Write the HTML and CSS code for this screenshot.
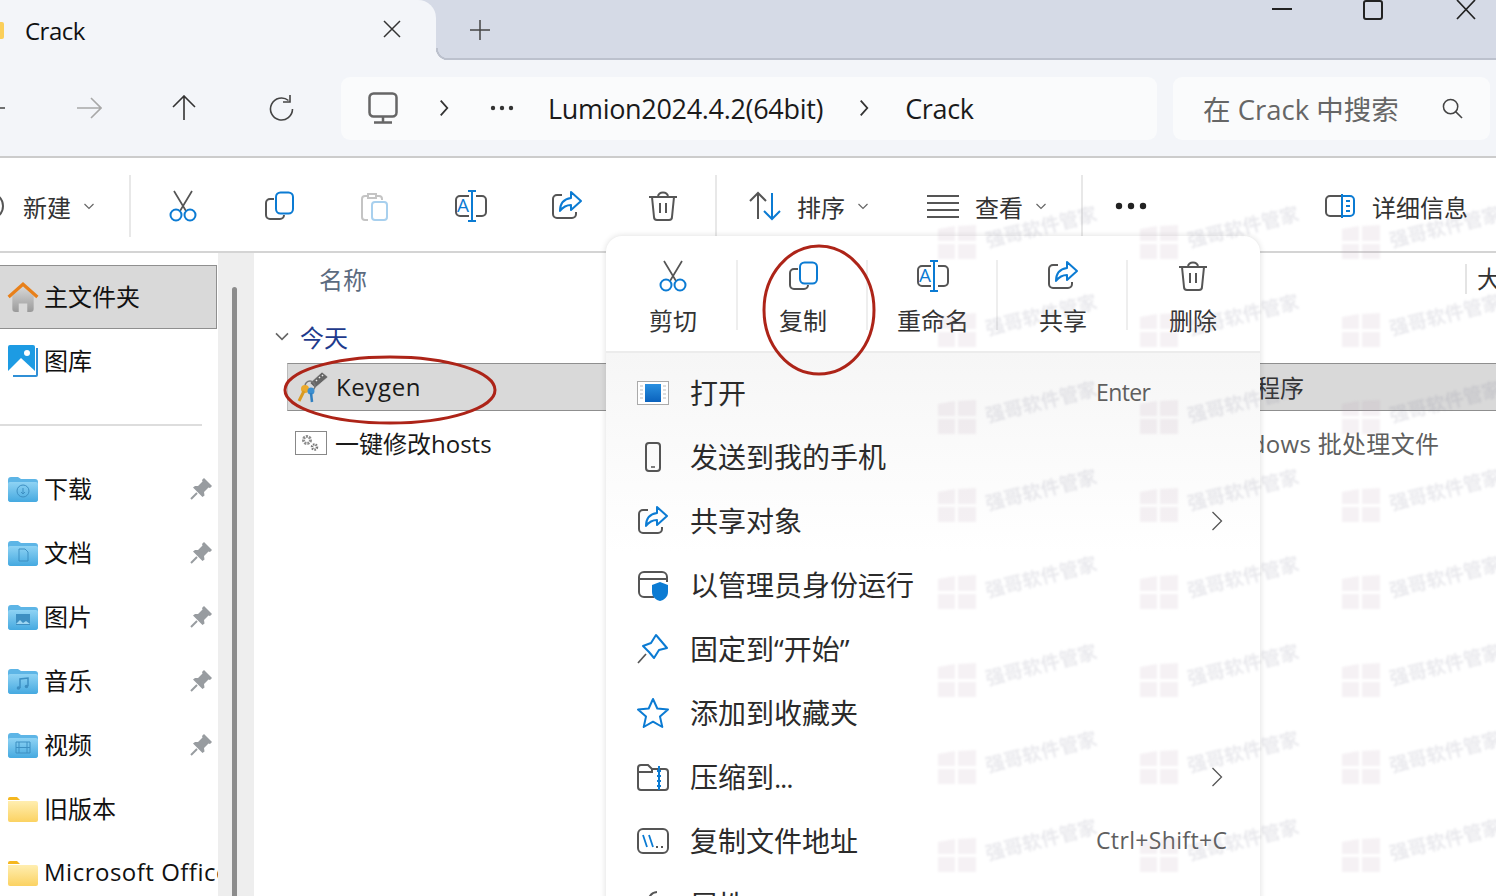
FILE: index.html
```html
<!DOCTYPE html>
<html lang="zh-CN">
<head>
    <meta charset="UTF-8">
    <meta name="viewport" content="width=device-width, initial-scale=1.0">
    <title>Crack - File Explorer</title>
    <link rel="stylesheet" href="styles.css">
</head>
<body>
    <!-- shared icons -->
    <svg class="sprite" xmlns="http://www.w3.org/2000/svg">
        <defs>
            <linearGradient id="g-blue" x1="0" y1="0" x2="0" y2="1"><stop offset="0" stop-color="#8fd3f4"/><stop offset="1" stop-color="#45a9e0"/></linearGradient>
            <linearGradient id="g-yellow" x1="0" y1="0" x2="0" y2="1"><stop offset="0" stop-color="#ffeeb0"/><stop offset="1" stop-color="#fbd262"/></linearGradient>
            <linearGradient id="g-home" x1="0" y1="0" x2="0" y2="1"><stop offset="0" stop-color="#d8d8d8"/><stop offset="1" stop-color="#9a9a9a"/></linearGradient>
            <linearGradient id="g-open" x1="0" y1="0" x2="0" y2="1"><stop offset="0" stop-color="#2a90e0"/><stop offset="1" stop-color="#0a62bd"/></linearGradient>
        </defs>
        <symbol id="i-cut" viewBox="0 0 32 32">
            <path d="M7 1l12 20M25 1L13 21" fill="none" stroke="#555" stroke-width="1.700"/>
            <circle cx="9" cy="25" r="5.500" fill="none" stroke="#0b7bd3" stroke-width="2"/>
            <circle cx="23" cy="25" r="5.500" fill="none" stroke="#0b7bd3" stroke-width="2"/>
        </symbol>
        <symbol id="i-copy" viewBox="0 0 32 32">
            <path d="M11 9H7a4 4 0 0 0-4 4v12a4 4 0 0 0 4 4h10a4 4 0 0 0 4-4" fill="none" stroke="#555" stroke-width="2"/>
            <rect x="13" y="2.500" width="17" height="21" rx="4.500" fill="none" stroke="#0b7bd3" stroke-width="2"/>
        </symbol>
        <symbol id="i-paste" viewBox="0 0 32 32">
            <path d="M17 6h3a3 3 0 0 1 3 3v1M9 30H6a3 3 0 0 1-3-3V9a3 3 0 0 1 3-3h3M9 4h8v4H9z" fill="none" stroke="#c4c4c4" stroke-width="2"/>
            <rect x="13" y="12" width="15" height="18" rx="3" fill="none" stroke="#a8d0ee" stroke-width="2"/>
        </symbol>
        <symbol id="i-rename" viewBox="0 0 32 32">
            <path d="M14 6H5a4 4 0 0 0-4 4v12a4 4 0 0 0 4 4h9M21 6h6a4 4 0 0 1 4 4v12a4 4 0 0 1-4 4h-6" fill="none" stroke="#555" stroke-width="2"/>
            <path d="M13 1h8M13 31h8M17 1v30" fill="none" stroke="#0b7bd3" stroke-width="2"/>
            <text x="8" y="21.500" class="icon-a" text-anchor="middle">A</text>
        </symbol>
        <symbol id="i-share" viewBox="0 0 32 32">
            <path d="M11 5H6a4 4 0 0 0-4 4v15a4 4 0 0 0 4 4h15a4 4 0 0 0 4-4v-2" fill="none" stroke="#555" stroke-width="2"/>
            <path d="M20 2l10 9-10 9v-5c-5 0-8 2-11 6 0-8 4-12 11-13z" fill="none" stroke="#0b7bd3" stroke-width="2" stroke-linejoin="round"/>
        </symbol>
        <symbol id="i-trash" viewBox="0 0 32 32">
            <path d="M2 7h28M11 7c0-6 10-6 10 0M5 7l2 20a3 3 0 0 0 3 3h12a3 3 0 0 0 3-3l2-20M13 13v10M19 13v10" fill="none" stroke="#555" stroke-width="2"/>
        </symbol>
        <symbol id="i-folder-blue" viewBox="0 0 30 26">
            <path d="M0 4a3 3 0 0 1 3-3h7l3 2h14a3 3 0 0 1 3 3v17a3 3 0 0 1-3 3H3a3 3 0 0 1-3-3z" fill="#5db5e6"/>
            <path d="M0 8a2 2 0 0 1 2-2h26a2 2 0 0 1 2 2v15a3 3 0 0 1-3 3H3a3 3 0 0 1-3-3z" fill="url(#g-blue)"/>
        </symbol>
        <symbol id="i-folder-yellow" viewBox="0 0 30 26">
            <path d="M0 3a2 2 0 0 1 2-2h7l3 3H0z" fill="#f5b71f"/>
            <path d="M0 5h28a2 2 0 0 1 2 2v17a2 2 0 0 1-2 2H2a2 2 0 0 1-2-2z" fill="url(#g-yellow)"/>
        </symbol>
        <symbol id="i-pin" viewBox="0 0 22 22">
            <path d="M14 0l8 8-2 2-1.500-.5L14 14l.5 3.500-2 1.500L3 9.500 5 8h3l4.500-4.500L12 2z" fill="#989ca0"/>
            <path d="M7 15l-6 6" stroke="#989ca0" stroke-width="2"/>
        </symbol>
        <symbol id="i-chev" viewBox="0 0 12 12">
            <path d="M1.500 4L6 8.500 10.500 4" fill="none" stroke="#666" stroke-width="1.200"/>
        </symbol>
        <symbol id="i-right" viewBox="0 0 12 22">
            <path d="M2 2l8 9-8 9" fill="none" stroke="#333" stroke-width="2.200"/>
        </symbol>
        <symbol id="i-right-thin" viewBox="0 0 12 22">
            <path d="M1.500 2l9 9-9 9" fill="none" stroke="#555" stroke-width="1.300"/>
        </symbol>
        <symbol id="i-win" viewBox="0 0 38 34">
            <path d="M0 4l17-3v15H0zM20 1l18-1v16H20zM0 19h17v15H0zM20 19h18v15H20z"/>
        </symbol>
    </svg>

    <div class="window">
        <header class="tabstrip">
            <div class="tab">
                <span class="tab-folder"></span>
                <span class="tab-title">Crack</span>
                <svg class="tab-close" viewBox="0 0 18 18"><path d="M1 1l16 16M17 1L1 17" stroke="#333" stroke-width="1.500"/></svg>
            </div>
            <svg class="tab-plus" viewBox="0 0 20 20"><path d="M10 0v20M0 10h20" stroke="#444" stroke-width="1.500"/></svg>
            <div class="winctl">
                <svg class="ctl-min" viewBox="0 0 20 20"><path d="M0 9h20" stroke="#222" stroke-width="2"/></svg>
                <svg class="ctl-max" viewBox="0 0 20 20"><rect x="1" y="1" width="18" height="18" rx="2" fill="none" stroke="#222" stroke-width="2"/></svg>
                <svg class="ctl-close" viewBox="0 0 20 20"><path d="M1 0l18 19M19 0L1 19" stroke="#222" stroke-width="1.700"/></svg>
            </div>
        </header>

        <nav class="navbar">
            <div class="nav-btn nav-first"><svg viewBox="0 0 26 26"><path d="M25 13H1M11 3L1 13l10 10" fill="none" stroke="#444" stroke-width="1.600"/></svg></div>
            <div class="nav-btn"><svg viewBox="0 0 26 26"><path d="M1 13h24M15 3l10 10-10 10" fill="none" stroke="#a8a8a8" stroke-width="1.600"/></svg></div>
            <div class="nav-btn nav-up"><svg viewBox="0 0 26 26"><path d="M13 25V1M2 12L13 1l11 11" fill="none" stroke="#333" stroke-width="1.600"/></svg></div>
            <div class="nav-btn"><svg viewBox="0 0 26 26"><path d="M20.500 5.500A11 11 0 1 0 24.500 14M22 0v7h-7" fill="none" stroke="#444" stroke-width="1.600"/></svg></div>
            <div class="address">
                <svg class="pc-icon" viewBox="0 0 30 32"><rect x="1.500" y="1.500" width="27" height="23" rx="4" fill="none" stroke="#666" stroke-width="2.500"/><path d="M15 25v5M6 30.500h18" stroke="#666" stroke-width="2.500"/></svg>
                <svg class="crumb-sep sep-first" viewBox="0 0 12 22"><use href="#i-right"/></svg>
                <svg class="crumb-dots" viewBox="0 0 24 6"><circle cx="3" cy="3" r="2.200" fill="#333"/><circle cx="12" cy="3" r="2.200" fill="#333"/><circle cx="21" cy="3" r="2.200" fill="#333"/></svg>
                <span class="crumb crumb-lumion">Lumion2024.4.2(64bit)</span>
                <svg class="crumb-sep sep-second" viewBox="0 0 12 22"><use href="#i-right"/></svg>
                <span class="crumb crumb-crack">Crack</span>
            </div>
            <div class="search">
                <span class="search-text">在 Crack 中搜索</span>
                <svg class="search-icon" viewBox="0 0 22 22"><circle cx="9" cy="9" r="7.500" fill="none" stroke="#444" stroke-width="1.600"/><path d="M14 14l7 7" stroke="#444" stroke-width="1.600"/></svg>
            </div>
        </nav>

        <div class="toolbar">
            <div class="tool-new">
                <svg class="new-circle" viewBox="0 0 32 32"><circle cx="16" cy="16" r="13" fill="none" stroke="#555" stroke-width="2"/></svg>
                <span>新建</span>
                <svg class="chev" viewBox="0 0 12 12"><use href="#i-chev"/></svg>
            </div>
            <span class="tool-sep"></span>
            <div class="tool tool-cut"><svg class="icon32"><use href="#i-cut"/></svg></div>
            <div class="tool tool-copy"><svg class="icon32"><use href="#i-copy"/></svg></div>
            <div class="tool"><svg class="icon32"><use href="#i-paste"/></svg></div>
            <div class="tool"><svg class="icon32"><use href="#i-rename"/></svg></div>
            <div class="tool"><svg class="icon32"><use href="#i-share"/></svg></div>
            <div class="tool"><svg class="icon32"><use href="#i-trash"/></svg></div>
            <span class="tool-sep sep-sort"></span>
            <div class="tool-text tool-sort">
                <svg class="icon32" viewBox="0 0 32 32"><path d="M9 29V3M1 11l8-8 8 8" fill="none" stroke="#555" stroke-width="2"/><path d="M23 3v26M15 21l8 8 8-8" fill="none" stroke="#0b7bd3" stroke-width="2"/></svg>
                <span>排序</span>
                <svg class="chev" viewBox="0 0 12 12"><use href="#i-chev"/></svg>
            </div>
            <div class="tool-text tool-view">
                <svg class="icon32" viewBox="0 0 32 32"><path d="M0 6h32M0 13h32M0 20h32M0 27h32" stroke="#555" stroke-width="2"/></svg>
                <span>查看</span>
                <svg class="chev" viewBox="0 0 12 12"><use href="#i-chev"/></svg>
            </div>
            <span class="tool-sep sep-more"></span>
            <svg class="more-dots" viewBox="0 0 32 8"><circle cx="4" cy="4" r="3.200" fill="#222"/><circle cx="16" cy="4" r="3.200" fill="#222"/><circle cx="28" cy="4" r="3.200" fill="#222"/></svg>
            <div class="tool-text tool-details">
                <svg class="icon32" viewBox="0 0 32 32"><path d="M18 6H6a4 4 0 0 0-4 4v12a4 4 0 0 0 4 4h12" fill="none" stroke="#555" stroke-width="2"/><path d="M18 4v24M18 6h8a4 4 0 0 1 4 4v12a4 4 0 0 1-4 4h-8M22 11h4M22 16h4M22 21h4" fill="none" stroke="#0b7bd3" stroke-width="2"/></svg>
                <span>详细信息</span>
            </div>
        </div>

        <div class="main">
            <aside class="sidebar">
                <div class="side-row selected">
                    <svg class="side-icon side-icon-lg" viewBox="0 0 30 30"><path d="M5 14l10-9 10 9v12a3 3 0 0 1-3 3h-3v-8h-8v8H8a3 3 0 0 1-3-3z" fill="url(#g-home)"/><path d="M1.500 15L15 3l13.500 12" fill="none" stroke="#e8801a" stroke-width="3"/></svg>
                    <span class="side-label">主文件夹</span>
                </div>
                <div class="side-row">
                    <svg class="side-icon side-icon-lg" viewBox="0 0 30 32"><path d="M28 3h2v27a2 2 0 0 1-2 2H5v-2h23z" fill="#2f8fd6"/><rect x="0" y="0" width="27" height="28" rx="2" fill="#1d9be3"/><path d="M0 26l13-13 14 13v2H0z" fill="#fff"/><circle cx="19" cy="8" r="3" fill="#fff"/></svg>
                    <span class="side-label">图库</span>
                </div>
                <div class="side-divider"></div>
                <div class="side-row">
                    <svg class="side-icon" viewBox="0 0 30 26"><use href="#i-folder-blue"/><circle cx="15" cy="15" r="6" fill="none" stroke="#3d8fc2"/><path d="M15 12v6M13 16l2 2 2-2" fill="none" stroke="#3d8fc2"/></svg>
                    <span class="side-label">下载</span>
                    <svg class="pin" viewBox="0 0 22 22"><use href="#i-pin"/></svg>
                </div>
                <div class="side-row">
                    <svg class="side-icon" viewBox="0 0 30 26"><use href="#i-folder-blue"/><path d="M11 9h6l3 3v9h-9z" fill="none" stroke="#3d8fc2"/></svg>
                    <span class="side-label">文档</span>
                    <svg class="pin" viewBox="0 0 22 22"><use href="#i-pin"/></svg>
                </div>
                <div class="side-row">
                    <svg class="side-icon" viewBox="0 0 30 26"><use href="#i-folder-blue"/><rect x="8" y="10" width="14" height="11" fill="#3d8fc2"/><path d="M8 20l4-4 3 3 3-2 4 3z" fill="#9ed6f2"/></svg>
                    <span class="side-label">图片</span>
                    <svg class="pin" viewBox="0 0 22 22"><use href="#i-pin"/></svg>
                </div>
                <div class="side-row">
                    <svg class="side-icon" viewBox="0 0 30 26"><use href="#i-folder-blue"/><path d="M12 20V11l8-1v8" fill="none" stroke="#3d8fc2" stroke-width="1.500"/><circle cx="10.500" cy="20" r="1.800" fill="#3d8fc2"/><circle cx="18.500" cy="18.500" r="1.800" fill="#3d8fc2"/></svg>
                    <span class="side-label">音乐</span>
                    <svg class="pin" viewBox="0 0 22 22"><use href="#i-pin"/></svg>
                </div>
                <div class="side-row">
                    <svg class="side-icon" viewBox="0 0 30 26"><use href="#i-folder-blue"/><path d="M8 10h14v11H8zM11 10v11M19 10v11M8 15.500h14" fill="none" stroke="#3d8fc2"/></svg>
                    <span class="side-label">视频</span>
                    <svg class="pin" viewBox="0 0 22 22"><use href="#i-pin"/></svg>
                </div>
                <div class="side-row">
                    <svg class="side-icon" viewBox="0 0 30 26"><use href="#i-folder-yellow"/></svg>
                    <span class="side-label">旧版本</span>
                </div>
                <div class="side-row">
                    <svg class="side-icon" viewBox="0 0 30 26"><use href="#i-folder-yellow"/></svg>
                    <span class="side-label side-latin">Microsoft Office</span>
                </div>
            </aside>

            <div class="gutter"><div class="scrollbar"></div></div>

            <section class="files">
                <div class="files-head">
                    <span class="head-name">名称</span>
                    <span class="head-size">大小</span>
                </div>
                <div class="group">
                    <svg class="group-chev" viewBox="0 0 12 12"><use href="#i-chev"/></svg>
                    <span>今天</span>
                </div>
                <div class="file selected">
                    <div class="file-name">
                        <svg class="file-icon" viewBox="0 0 32 32">
                            <path d="M14 12L26 1l6 5-13 11z" fill="#666" stroke="#ddd" stroke-width=".6"/>
                            <path d="M20 9l1 1M23 6l1 1M26 4l1 1" stroke="#eee" stroke-width="1.500"/>
                            <circle cx="14" cy="15" r="5" fill="none" stroke="#777" stroke-width="1.500"/>
                            <circle cx="9" cy="18" r="4" fill="#eba92c"/>
                            <path d="M8 20L3 30" stroke="#d99a20" stroke-width="3"/>
                            <circle cx="15" cy="20" r="3.500" fill="#3c8fd0"/>
                            <path d="M15 22l1 9" stroke="#2f7fc0" stroke-width="2.500"/>
                        </svg>
                        <span class="name-latin">Keygen</span>
                    </div>
                    <span class="file-type">应用程序</span>
                </div>
                <div class="file">
                    <div class="file-name">
                        <svg class="file-icon" viewBox="0 0 32 32">
                            <rect x=".5" y="4.500" width="31" height="23" fill="#fff" stroke="#888"/>
                            <circle cx="12" cy="13" r="3.500" fill="none" stroke="#8c8c8c" stroke-width="3" stroke-dasharray="2 1"/>
                            <circle cx="19.500" cy="20" r="2.500" fill="none" stroke="#777" stroke-width="2.500" stroke-dasharray="1.500 1"/>
                        </svg>
                        <span>一键修改hosts</span>
                    </div>
                    <span class="file-type type-long">Windows 批处理文件</span>
                </div>
            </section>
        </div>

        <!-- right click menu, sits over the file list -->
        <div class="menu">
            <div class="menu-head">
                <div class="menu-tool"><svg class="icon32"><use href="#i-cut"/></svg><span>剪切</span></div>
                <div class="menu-tool"><svg class="icon32"><use href="#i-copy"/></svg><span>复制</span></div>
                <div class="menu-tool"><svg class="icon32"><use href="#i-rename"/></svg><span>重命名</span></div>
                <div class="menu-tool"><svg class="icon32"><use href="#i-share"/></svg><span>共享</span></div>
                <div class="menu-tool"><svg class="icon32"><use href="#i-trash"/></svg><span>删除</span></div>
            </div>
            <div class="menu-list">
                <div class="menu-row">
                    <svg class="icon32" viewBox="0 0 32 32"><rect x=".5" y="4.500" width="31" height="23" fill="#fff" stroke="#aaa"/><rect x="8" y="7" width="16" height="18" fill="url(#g-open)"/><path d="M3 9h3M3 13h3M3 17h3M3 21h3M26 9h3M26 13h3M26 17h3M26 21h3" stroke="#bbb"/></svg>
                    <span>打开</span>
                    <span class="shortcut key-enter">Enter</span>
                </div>
                <div class="menu-row">
                    <svg class="icon32" viewBox="0 0 32 32"><rect x="9" y="2" width="14" height="28" rx="3" fill="none" stroke="#555" stroke-width="2"/><path d="M14 26h4" stroke="#555" stroke-width="1.500"/></svg>
                    <span>发送到我的手机</span>
                </div>
                <div class="menu-row">
                    <svg class="icon32"><use href="#i-share"/></svg>
                    <span>共享对象</span>
                    <svg class="row-more" viewBox="0 0 12 22"><use href="#i-right-thin"/></svg>
                </div>
                <div class="menu-row">
                    <svg class="icon32" viewBox="0 0 32 32"><path d="M17 28H7a5 5 0 0 1-5-5V8a5 5 0 0 1 5-5h18a5 5 0 0 1 5 5v5M2 10h28" fill="none" stroke="#555" stroke-width="2"/><path d="M23 13l8 3v7c0 5-4 8-8 9-4-1-8-4-8-9v-7z" fill="#0b7bd3"/></svg>
                    <span>以管理员身份运行</span>
                </div>
                <div class="menu-row">
                    <svg class="icon32" viewBox="0 0 32 32"><path d="M19 2l11 13-8 2-5 8-5-6-6-6 8-3z" fill="none" stroke="#0b7bd3" stroke-width="2" stroke-linejoin="round"/><path d="M9 21L1 30" stroke="#555" stroke-width="1.700"/></svg>
                    <span>固定到“开始”</span>
                </div>
                <div class="menu-row">
                    <svg class="icon32" viewBox="0 0 32 32"><path d="M16 2l4.300 9.500 10.700 1.100-8 7 2.300 10.400L16 24.700l-9.300 5.300L9 19.600l-8-7 10.700-1.100z" fill="none" stroke="#0b7bd3" stroke-width="2" stroke-linejoin="round"/></svg>
                    <span>添加到收藏夹</span>
                </div>
                <div class="menu-row">
                    <svg class="icon32" viewBox="0 0 32 32"><path d="M1 26V7a3 3 0 0 1 3-3h7l4 4h13a3 3 0 0 1 3 3v15a3 3 0 0 1-3 3H4a3 3 0 0 1-3-3zM1 11h14l0-3" fill="none" stroke="#555" stroke-width="2"/><path d="M22 5v24M20 10h4M20 15h4M20 20h4M20 25h4" fill="none" stroke="#0b7bd3" stroke-width="2"/></svg>
                    <span>压缩到<i class="dots">...</i></span>
                    <svg class="row-more" viewBox="0 0 12 22"><use href="#i-right-thin"/></svg>
                </div>
                <div class="menu-row">
                    <svg class="icon32" viewBox="0 0 32 32"><rect x="1" y="4" width="30" height="24" rx="5" fill="none" stroke="#555" stroke-width="2"/><path d="M6 10l4 12M12 10l4 12" stroke="#0b7bd3" stroke-width="1.800"/><path d="M19 22h2M24 22h2" stroke="#555" stroke-width="2.200"/></svg>
                    <span>复制文件地址</span>
                    <span class="shortcut key-long">Ctrl+Shift+C</span>
                </div>
                <div class="menu-row">
                    <svg class="icon32" viewBox="0 0 32 32"><path d="M20 3a9 9 0 0 0-8 12L3 24v5h5l9-9a9 9 0 0 0 11-9" fill="none" stroke="#555" stroke-width="2"/></svg>
                    <span>属性</span>
                </div>
            </div>
        </div>

        <!-- red marks drawn on the screenshot -->
        <svg class="mark mark-keygen" viewBox="0 0 214 70"><ellipse cx="107" cy="35" rx="105" ry="33" fill="none" stroke="#ad2418" stroke-width="3"/></svg>
        <svg class="mark mark-copy" viewBox="0 0 114 132"><ellipse cx="57" cy="66" rx="55" ry="64" fill="none" stroke="#ad2418" stroke-width="3"/></svg>

        <div class="watermark">
            <div class="wm"><svg viewBox="0 0 38 34"><use href="#i-win"/></svg><span>强哥软件管家</span></div>
            <div class="wm"><svg viewBox="0 0 38 34"><use href="#i-win"/></svg><span>强哥软件管家</span></div>
            <div class="wm"><svg viewBox="0 0 38 34"><use href="#i-win"/></svg><span>强哥软件管家</span></div>
            <div class="wm"><svg viewBox="0 0 38 34"><use href="#i-win"/></svg><span>强哥软件管家</span></div>
            <div class="wm"><svg viewBox="0 0 38 34"><use href="#i-win"/></svg><span>强哥软件管家</span></div>
            <div class="wm"><svg viewBox="0 0 38 34"><use href="#i-win"/></svg><span>强哥软件管家</span></div>
            <div class="wm"><svg viewBox="0 0 38 34"><use href="#i-win"/></svg><span>强哥软件管家</span></div>
            <div class="wm"><svg viewBox="0 0 38 34"><use href="#i-win"/></svg><span>强哥软件管家</span></div>
            <div class="wm"><svg viewBox="0 0 38 34"><use href="#i-win"/></svg><span>强哥软件管家</span></div>
            <div class="wm"><svg viewBox="0 0 38 34"><use href="#i-win"/></svg><span>强哥软件管家</span></div>
            <div class="wm"><svg viewBox="0 0 38 34"><use href="#i-win"/></svg><span>强哥软件管家</span></div>
            <div class="wm"><svg viewBox="0 0 38 34"><use href="#i-win"/></svg><span>强哥软件管家</span></div>
            <div class="wm"><svg viewBox="0 0 38 34"><use href="#i-win"/></svg><span>强哥软件管家</span></div>
            <div class="wm"><svg viewBox="0 0 38 34"><use href="#i-win"/></svg><span>强哥软件管家</span></div>
            <div class="wm"><svg viewBox="0 0 38 34"><use href="#i-win"/></svg><span>强哥软件管家</span></div>
            <div class="wm"><svg viewBox="0 0 38 34"><use href="#i-win"/></svg><span>强哥软件管家</span></div>
            <div class="wm"><svg viewBox="0 0 38 34"><use href="#i-win"/></svg><span>强哥软件管家</span></div>
            <div class="wm"><svg viewBox="0 0 38 34"><use href="#i-win"/></svg><span>强哥软件管家</span></div>
            <div class="wm"><svg viewBox="0 0 38 34"><use href="#i-win"/></svg><span>强哥软件管家</span></div>
            <div class="wm"><svg viewBox="0 0 38 34"><use href="#i-win"/></svg><span>强哥软件管家</span></div>
            <div class="wm"><svg viewBox="0 0 38 34"><use href="#i-win"/></svg><span>强哥软件管家</span></div>
            <div class="wm"><svg viewBox="0 0 38 34"><use href="#i-win"/></svg><span>强哥软件管家</span></div>
            <div class="wm"><svg viewBox="0 0 38 34"><use href="#i-win"/></svg><span>强哥软件管家</span></div>
            <div class="wm"><svg viewBox="0 0 38 34"><use href="#i-win"/></svg><span>强哥软件管家</span></div>
        </div>
    </div>
</body>
</html>
```

FILE: styles.css
```css
* {
    box-sizing: border-box;
}

body {
    margin: 0;
    font-family: "Open Sans", "Noto Sans CJK SC", sans-serif;
    font-size: 24px;
    color: #1a1a1a;
    background-color: #fff;
}

svg {
    display: block;
    flex: none;
}

.sprite {
    width: 0;
    height: 0;
}

.icon-a {
    font-family: "Open Sans", sans-serif;
    font-size: 19px;
    fill: #0b7bd3;
}

.icon32 {
    width: 32px;
    height: 32px;
}

.window {
    position: relative;
    width: 1496px;
    height: 896px;
    overflow: hidden;
}

/* tab strip */
.tabstrip {
    display: flex;
    align-items: center;
    height: 60px;
    background-color: #d5dae6;
    border-bottom: 2px solid #bcc1cd;
}

.tab {
    position: relative;
    display: flex;
    align-items: center;
    width: 436px;
    height: 60px;
    margin-bottom: -2px;
    background-color: #f3f5f9;
    border-top-right-radius: 18px;
}

.tab::after {
    content: '';
    position: absolute;
    left: 100%;
    bottom: 0;
    width: 12px;
    height: 12px;
    background: radial-gradient(circle at 100% 0, transparent 10px, #bcc1cd 10.5px, #bcc1cd 12px, #f3f5f9 12.5px);
}

.tab-folder {
    width: 4px;
    height: 17px;
    background-color: #fbcf5a;
    border-radius: 0 2px 2px 0;
}

.tab-title {
    margin-left: 21px;
    font-weight: 500;
    letter-spacing: -0.5px;
    color: #111;
}

.tab-close {
    width: 18px;
    height: 18px;
    margin-left: auto;
    margin-right: 35px;
    margin-bottom: 2px;
}

.tab-plus {
    width: 20px;
    height: 20px;
    margin-left: 34px;
    margin-top: 2px;
}

.winctl {
    display: flex;
    align-self: flex-start;
    margin-left: auto;
    margin-right: 20px;
}

.winctl svg {
    width: 20px;
    height: 20px;
}

.ctl-max {
    margin-left: 71px;
}

.ctl-close {
    margin-left: 73px;
}

/* address row */
.navbar {
    display: flex;
    align-items: center;
    height: 98px;
    background-color: #f3f5f9;
    border-bottom: 2px solid #ccc;
}

.nav-btn {
    display: flex;
    justify-content: center;
    width: 96px;
}

.nav-btn svg {
    width: 26px;
    height: 26px;
}

.nav-first {
    margin-left: -55px;
}

.nav-up svg {
    margin-right: 2px;
}

.address,
.search {
    display: flex;
    align-items: center;
    height: 63px;
    background-color: #fafbfc;
    border-radius: 9px;
    font-size: 27px;
}

.address {
    width: 816px;
    margin-left: 12px;
    padding-left: 27px;
}

.pc-icon {
    width: 30px;
    height: 32px;
}

.crumb {
    letter-spacing: -0.32px;
}

.crumb-sep {
    width: 12px;
    height: 18px;
}

.sep-first {
    margin-left: 40px;
}

.crumb-dots {
    width: 24px;
    height: 6px;
    margin-left: 40px;
}

.crumb-lumion {
    margin-left: 34px;
}

.sep-second {
    margin-left: 35px;
}

.crumb-crack {
    margin-left: 35px;
}

.search {
    width: 317px;
    margin-left: 16px;
    padding-left: 30px;
    font-size: 27.5px;
    color: #666;
}

.search-icon {
    width: 21px;
    height: 21px;
    margin-left: auto;
    margin-right: 27px;
}

/* command bar */
.toolbar {
    display: flex;
    align-items: center;
    height: 95px;
    padding-top: 3px;
    color: #333;
    border-bottom: 2px solid #d4d4d4;
}

.tool-new {
    display: flex;
    align-items: center;
    width: 129px;
}

.new-circle {
    width: 32px;
    height: 32px;
    margin-left: -26px;
    margin-right: 17px;
}

.chev {
    width: 12px;
    height: 12px;
    margin-left: 12px;
}

.tool-sep {
    width: 2px;
    height: 62px;
    background-color: #e8e8e8;
}

.tool {
    display: flex;
    justify-content: center;
    width: 96px;
}

.tool-cut {
    margin-left: 1px;
}

.tool-cut svg {
    margin-left: 6px;
}

.tool-copy {
    margin-left: 3px;
}

.tool-text {
    display: flex;
    align-items: center;
}

.tool-text span {
    margin-left: 16px;
}

.sep-sort {
    margin-left: 4px;
}

.tool-sort {
    margin-left: 32px;
}

.tool-view {
    margin-left: 58px;
}

.sep-more {
    margin-left: 34px;
}

.more-dots {
    width: 32px;
    height: 8px;
    margin-left: 32px;
}

.tool-details {
    margin-left: 177px;
}

/* left pane and file list */
.main {
    display: flex;
    height: 643px;
}

.sidebar {
    width: 218px;
    padding-top: 12px;
    overflow: hidden;
}

.side-row {
    display: flex;
    align-items: center;
    height: 64px;
    padding-left: 8px;
    color: #111;
    white-space: nowrap;
}

.side-row.selected {
    width: 217px;
    background-color: #d9d9d9;
    border: 1px solid #8f8f8f;
    border-left: none;
}

.side-icon {
    width: 30px;
    height: 28px;
}

.side-icon-lg {
    width: 32px;
    height: 32px;
    margin-left: -1px;
    margin-right: -1px;
}

.side-label {
    margin-left: 6px;
    padding-bottom: 3px;
}

.side-latin {
    letter-spacing: 0.5px;
}

.pin {
    width: 22px;
    height: 22px;
    margin-left: auto;
    margin-right: 6px;
}

.side-divider {
    height: 64px;
    position: relative;
}

.side-divider::after {
    content: '';
    position: absolute;
    top: 31px;
    left: 0;
    width: 202px;
    height: 2px;
    background-color: #ddd;
}

.gutter {
    width: 36px;
    padding: 34px 0 0 14px;
    background-color: #eeeeee;
}

.scrollbar {
    width: 5px;
    height: 620px;
    background-color: #8c8c8c;
    border-radius: 3px;
}

.files {
    flex: 1;
    min-width: 0;
}

.files-head {
    display: flex;
    align-items: center;
    height: 55px;
    padding-left: 65px;
    padding-bottom: 4px;
    color: #5c6b80;
    white-space: nowrap;
}

.head-size {
    margin-left: 1098px;
    border-left: 2px solid #e4e4e4;
    padding-left: 10px;
    line-height: 30px;
    color: #333;
}

.group {
    display: flex;
    align-items: center;
    height: 55px;
    padding: 1px 0 0 20px;
    color: #1e3a8c;
}

.group-chev {
    width: 16px;
    height: 16px;
    margin-right: 10px;
}

.file {
    display: flex;
    align-items: center;
    height: 48px;
    margin: 0 0 8px 33px;
    padding-left: 8px;
}

.file.selected {
    background-color: #d9d9d9;
    border-top: 1px solid #8f8f8f;
    border-bottom: 1px solid #8f8f8f;
    border-left: 1px solid #bbb;
}

.file-name {
    display: flex;
    align-items: center;
    width: 912px;
}

.file-name span {
    padding-bottom: 2px;
}

.name-latin {
    letter-spacing: 0.6px;
}

.file-icon {
    width: 32px;
    height: 32px;
    margin-right: 8px;
}

.file-type {
    padding-bottom: 2px;
    color: #5f5f5f;
    white-space: nowrap;
}

.type-long {
    letter-spacing: 0.3px;
}

.selected .file-type {
    color: #333;
}

/* context menu */
.menu {
    position: absolute;
    left: 606px;
    top: 236px;
    width: 654px;
    height: 720px;
    background-color: #fff;
    border-radius: 16px;
    box-shadow: 0 0 6px rgba(0, 0, 0, 0.14);
}

.menu-head {
    display: flex;
    height: 117px;
    padding-left: 2px;
    border-bottom: 2px solid #ececec;
    color: #333;
}

.menu-tool {
    position: relative;
    display: flex;
    flex-direction: column;
    align-items: center;
    width: 130px;
    padding-top: 24px;
}

.menu-tool span {
    margin-top: 13px;
    line-height: 32px;
}

.menu-tool:not(:last-child)::after {
    content: '';
    position: absolute;
    top: 24px;
    right: 0;
    width: 2px;
    height: 70px;
    background-color: #eeeeee;
}

.menu-list {
    padding-top: 8px;
    background: linear-gradient(#f6f6f6, #fff 200px);
    font-size: 28px;
    color: #2b2b2b;
}

.menu-row {
    display: grid;
    grid-template-columns: 32px 385px 1fr;
    column-gap: 21px;
    align-items: center;
    height: 64px;
    padding-left: 31px;
}

.menu-row span {
    padding-bottom: 2px;
}

.dots {
    font-style: normal;
    letter-spacing: -1.3px;
}

.shortcut {
    font-size: 23px;
    color: #5f5f5f;
    white-space: nowrap;
}

.key-enter {
    letter-spacing: -0.6px;
}

.key-long {
    letter-spacing: 0.35px;
}

.row-more {
    width: 12px;
    height: 22px;
    margin-left: 115px;
}

/* annotations */
.mark {
    position: absolute;
}

.mark-keygen {
    left: 283px;
    top: 355px;
    width: 214px;
    height: 70px;
}

.mark-copy {
    left: 762px;
    top: 244px;
    width: 114px;
    height: 132px;
}

.watermark {
    position: absolute;
    left: 938px;
    top: 225px;
    display: grid;
    grid-template-columns: repeat(3, 202px);
    grid-auto-rows: 87.5px;
    pointer-events: none;
    filter: blur(1px);
}

.wm {
    display: flex;
    align-items: flex-start;
}

.wm svg {
    width: 38px;
    height: 34px;
    fill: rgba(180, 150, 170, 0.13);
}

.wm span {
    margin-left: 8px;
    font-size: 19px;
    font-weight: 700;
    line-height: 20px;
    white-space: nowrap;
    color: rgba(120, 120, 140, 0.16);
    transform: translateY(-8px) rotate(-14deg);
}
```
